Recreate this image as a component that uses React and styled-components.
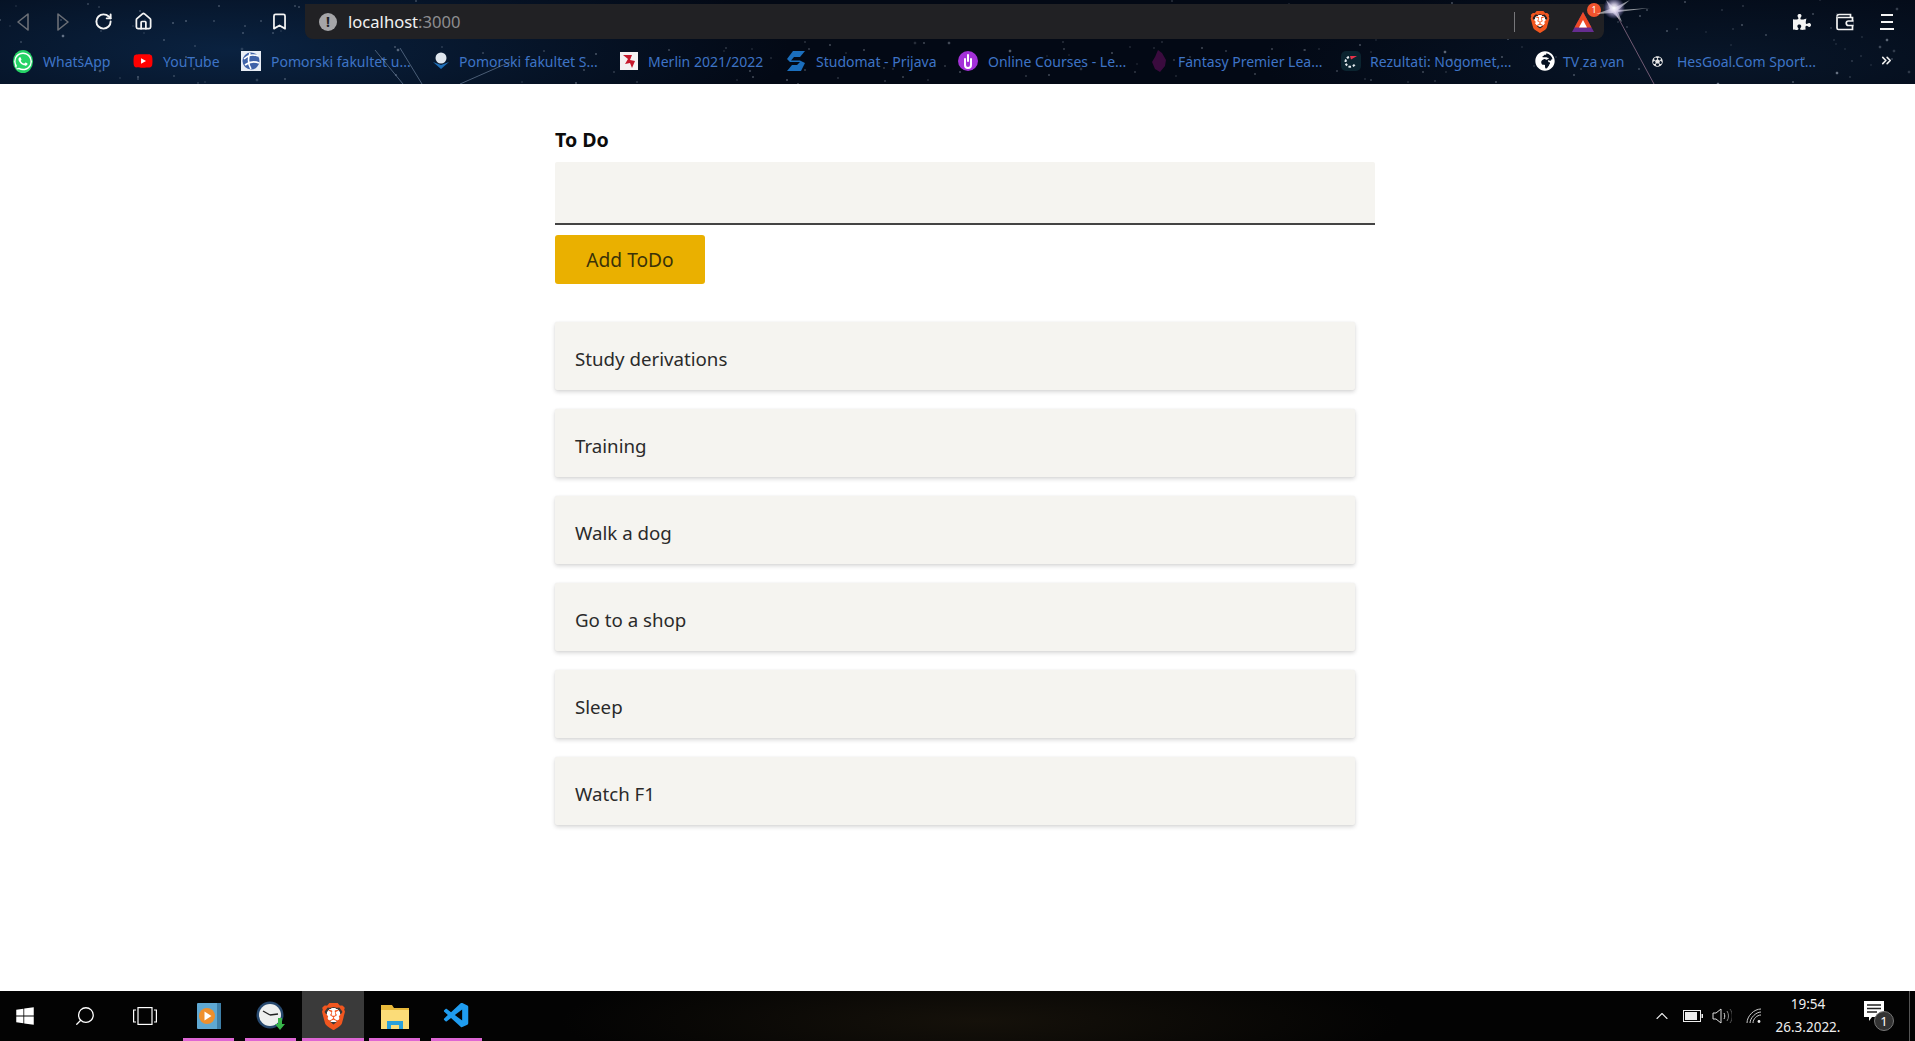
import styled, { createGlobalStyle } from "styled-components";
import { FaWhatsapp, FaPuzzlePiece, FaWindows, FaGlobeAfrica, FaYoutube } from "react-icons/fa";
import { SiBrave } from "react-icons/si";
import { VscVscode } from "react-icons/vsc";
import { IoFootball } from "react-icons/io5";
import { RotateCw, House, Bookmark, Search, ChevronUp, ChevronsRight } from "lucide-react";

const GlobalStyle = createGlobalStyle`
  html, body {
    margin: 0;
    height: 100%;
    overflow: hidden;
    background: #fff;
    font-family: "Noto Sans", "Open Sans", sans-serif;
  }
`;

// little seeded generator so the star field stays the same on every load
function makeStars(count, width, height) {
  let seed = 17;
  const next = () => {
    seed = (seed * 16807) % 2147483647;
    return seed / 2147483647;
  };
  const dots = [];
  for (let i = 0; i < count; i++) {
    const x = Math.round(next() * width);
    const y = Math.round(next() * height);
    const r = next() > 0.88 ? 1.8 : 1;
    const a = (0.25 + next() * 0.55).toFixed(2);
    dots.push(`radial-gradient(circle ${r}px at ${x}px ${y}px, rgba(225,235,250,${a}), transparent)`);
  }
  return dots.join(",");
}

const stars = makeStars(240, 1915, 84);

const Page = styled.div`
  height: 100vh;
  display: flex;
  flex-direction: column;
`;

const Chrome = styled.header`
  position: relative;
  height: 84px;
  flex: none;
  background: ${stars},
    radial-gradient(ellipse 560px 110px at 230px 50px, #0a2240, transparent),
    radial-gradient(ellipse 460px 90px at 1720px 60px, #081629, transparent),
    #030915;
`;

const Sky = styled.svg`
  position: absolute;
  inset: 0;
  z-index: 2;
  pointer-events: none;
`;

const Toolbar = styled.div`
  height: 41px;
  padding: 4px 8px 2px 3px;
  box-sizing: border-box;
  display: flex;
  align-items: stretch;
`;

const ToolGroup = styled.div`
  display: flex;
  align-items: center;
  margin-left: ${(p) => p.$offset || 0}px;
`;

const ToolButton = styled.div`
  width: ${(p) => p.$size || 40}px;
  height: 35px;
  display: flex;
  align-items: center;
  justify-content: center;
  color: ${(p) => (p.$dim ? "#6b6f76" : "#f4f4f4")};
`;

const UrlBar = styled.div`
  flex: 1;
  margin-left: 6px;
  height: 35px;
  background: #212124;
  border-radius: 0 0 8px 8px;
  display: flex;
  align-items: center;
  padding: 0 10px 0 14px;
  font-size: 16.6px;
`;

const InfoDot = styled.span`
  width: 18px;
  height: 18px;
  border-radius: 50%;
  background: #a5a5a8;
  color: #212124;
  font-size: 14px;
  font-weight: 700;
  line-height: 18px;
  text-align: center;
  margin-right: 11px;
`;

const Host = styled.span`
  color: #f2f2f2;
`;

const Port = styled.span`
  color: #8d8d90;
  flex: 1;
`;

const Divider = styled.span`
  width: 1px;
  height: 20px;
  background: #77777a;
  margin-right: 14px;
`;

const BraveIcon = styled(SiBrave)`
  color: #f1561f;
  background: radial-gradient(circle at 50% 45%, #fff 0 34%, transparent 36%);
`;

const RewardsIcon = styled.span`
  position: relative;
  width: 22px;
  height: 20px;
  margin-left: 21px;
  display: flex;
`;

const Badge = styled.span`
  position: absolute;
  top: -9px;
  right: -7px;
  width: 14px;
  height: 14px;
  border-radius: 50%;
  background: #f0532d;
  color: #fff;
  font-size: 9px;
  line-height: 14px;
  text-align: center;
`;

const BookmarkBar = styled.nav`
  height: 40px;
  padding-left: 13px;
  display: flex;
  align-items: center;
`;

const Mark = styled.a`
  display: flex;
  align-items: center;
  margin-right: ${(p) => p.$space}px;
`;

const MarkIcon = styled.span`
  width: 20px;
  height: 20px;
  flex: none;
  display: flex;
  align-items: center;
  justify-content: center;
  margin-right: ${(p) => p.$space || 10}px;
`;

const MarkLabel = styled.span`
  width: ${(p) => p.$width}px;
  color: #3e74c6;
  font-size: 14px;
  white-space: nowrap;
  overflow: visible;
`;

const WhatsAppIcon = styled(FaWhatsapp)`
  color: #fff;
  background: #25d366;
  border-radius: 50%;
  padding: 1px;
`;

const YouTubeIcon = styled(FaYoutube)`
  color: #f00;
  background: linear-gradient(#fff, #fff) center / 8px 8px no-repeat;
`;

const More = styled.span`
  position: absolute;
  right: 21px;
  top: 53px;
  color: #eee;
  display: flex;
`;

const Main = styled.main`
  flex: 1;
  padding: 46px 0 0 555px;
`;

const Column = styled.div`
  width: 820px;
`;

const FieldLabel = styled.label`
  display: block;
  font-size: 19.6px;
  line-height: 20px;
  font-weight: 700;
  color: #0c0c0c;
  margin-bottom: 12px;
`;

const TodoInput = styled.input`
  display: block;
  width: 100%;
  height: 63px;
  box-sizing: border-box;
  border: none;
  border-bottom: 2px solid #444;
  border-radius: 2px 2px 0 0;
  background: #f5f4f0;
  outline: none;
`;

const AddButton = styled.button`
  display: block;
  margin-top: 10px;
  width: 150px;
  height: 49px;
  border: none;
  border-radius: 3px;
  background: #eab000;
  color: #3a3208;
  font-family: inherit;
  font-size: 19.2px;
`;

const List = styled.ul`
  list-style: none;
  margin: 38px 0 0;
  padding: 0;
  width: 800px;
  display: flex;
  flex-direction: column;
  gap: 19px;
`;

const Item = styled.li`
  height: 68px;
  box-sizing: border-box;
  padding: 4px 20px 0;
  display: flex;
  align-items: center;
  background: #f5f4f0;
  border-radius: 2px;
  box-shadow: 0 2px 4px rgba(0, 0, 0, 0.16), 0 0 2px rgba(0, 0, 0, 0.06);
  color: #2a2a2a;
  font-size: 18.7px;
`;

const Taskbar = styled.footer`
  position: relative;
  height: 50px;
  flex: none;
  display: flex;
  align-items: stretch;
  background: radial-gradient(ellipse 420px 60px at 980px 30px, #15110a, transparent), #030303;
`;

const SystemGroup = styled.div`
  display: flex;
  margin-left: -5px;
`;

const SystemButton = styled.div`
  width: 60px;
  display: flex;
  align-items: center;
  justify-content: center;
  color: #fff;
`;

const SearchIcon = styled(Search)`
  transform: scaleX(-1);
`;

const Apps = styled.div`
  display: flex;
  margin-left: 3px;
`;

const AppButton = styled.div`
  width: 62px;
  display: flex;
  align-items: center;
  justify-content: center;
  position: relative;
  background: ${(p) => (p.$active ? "#3a3a3a" : "transparent")};
  &::after {
    content: "";
    position: absolute;
    bottom: 0;
    height: 3px;
    left: ${(p) => (p.$active ? 0 : 5)}px;
    right: ${(p) => (p.$active ? 0 : 6)}px;
    background: #de66d4;
  }
`;

const Tray = styled.div`
  margin-left: auto;
  display: flex;
  align-items: center;
  color: #eee;
  padding-right: 6px;
`;

const TrayIcon = styled.span`
  display: flex;
  margin-right: ${(p) => p.$space}px;
`;

const Clock = styled.div`
  width: 76px;
  margin-right: 18px;
  text-align: center;
  color: #eee;
  font-size: 13.5px;
  line-height: 23px;
`;

const Notes = styled.span`
  position: relative;
  width: 30px;
  height: 30px;
  margin-right: 15px;
  display: flex;
`;

const NoteCount = styled.span`
  position: absolute;
  right: 0;
  bottom: 0;
  width: 20px;
  height: 20px;
  box-sizing: border-box;
  border-radius: 50%;
  background: #333;
  border: 1px solid #777;
  color: #fff;
  font-size: 13px;
  line-height: 18px;
  text-align: center;
`;

const EdgeLine = styled.span`
  position: absolute;
  right: 5px;
  top: 0;
  bottom: 0;
  width: 1px;
  background: #555;
`;

const Triangle = ({ flip }) => (
  <svg width="14" height="20" viewBox="0 0 14 20" fill="none" stroke="currentColor" strokeWidth="1.6">
    <path d={flip ? "M2 2l10 8-10 8z" : "M12 2L2 10l10 8z"} strokeLinejoin="round" />
  </svg>
);

const Wallet = () => (
  <svg width="20" height="20" viewBox="0 0 20 20" fill="none" stroke="currentColor" strokeWidth="1.7">
    <path d="M2 4.5V16a1.5 1.5 0 0 0 1.5 1.5h14V5.5H3" />
    <path d="M2 4.5A2 2 0 0 1 4 2.5h11.5v3" />
    <path d="M18.5 9h-5a2 2 0 0 0 0 4.5h5" fill="#071326" />
  </svg>
);

const Burger = () => (
  <svg width="16" height="18" viewBox="0 0 16 18" stroke="currentColor" strokeWidth="2">
    <path d="M2 2h12M2 9h12M1 16h14" />
  </svg>
);

const Rewards = () => (
  <svg width="22" height="20" viewBox="0 0 22 20">
    <path d="M11 0l11 20H0z" fill="#662d91" />
    <path d="M11 0l8.5 15.5h-17z" fill="#ef4a25" />
    <path d="M11 8l4 7.5H7z" fill="#fff" />
  </svg>
);

const Pomorski = () => (
  <svg width="20" height="20" viewBox="0 0 20 20">
    <rect width="20" height="20" fill="#e8edf5" />
    <circle cx="10" cy="10" r="8.5" fill="#3f62a8" />
    <path d="M3 8c4-4 9-5 14-3M4 14c4-3 9-4 14-2M9 2c-2 5-2 11 1 16" stroke="#fff" strokeWidth="1.6" fill="none" />
  </svg>
);

const Droplet = () => (
  <svg width="20" height="20" viewBox="0 0 20 20">
    <circle cx="10" cy="7" r="5.5" fill="#dfe6ee" />
    <path d="M2 11l8 7 8-7-8 3z" fill="#1f6fb8" />
  </svg>
);

const Merlin = () => (
  <svg width="18" height="18" viewBox="0 0 18 18">
    <rect width="18" height="18" fill="#f4f1f1" />
    <path d="M3 3h9l-2 5 5 1-3 7-2-5-5 1 3-5z" fill="#c5182b" />
  </svg>
);

const Studomat = () => (
  <svg width="18" height="20" viewBox="0 0 18 20" fill="#1b6fbe">
    <path d="M6 0h12l-5 6H7L4 9.5h9L18 12l-4 8H0l5-6h5l3-3H3L0 8z" />
  </svg>
);

const OnlineCourses = () => (
  <svg width="20" height="20" viewBox="0 0 20 20">
    <circle cx="10" cy="10" r="10" fill="#a431d8" />
    <path d="M7 8v6a3 3 0 0 0 6 0V8M10 4v6" stroke="#fff" strokeWidth="2" fill="none" strokeLinecap="round" />
  </svg>
);

const Fantasy = () => (
  <svg width="16" height="22" viewBox="0 0 16 22" fill="#3a0b3e">
    <path d="M6 0l4 3 4 7-1 6-5 6-5-3-3-7 3-5z" />
  </svg>
);

const Rezultati = () => (
  <svg width="20" height="20" viewBox="0 0 20 20">
    <rect width="20" height="20" rx="5" fill="#0b2430" />
    <path d="M9 5h7l-6 3.5z" fill="#e8324a" />
    <path d="M8 6a5 5 0 1 0 6 7" stroke="#e4eaee" strokeWidth="2" strokeDasharray="2.4 1.6" fill="none" />
  </svg>
);

const Player = () => (
  <svg width="26" height="28" viewBox="0 0 26 28">
    <rect x="1" y="1" width="24" height="26" rx="1" fill="#5fa8d2" />
    <rect x="21" y="1" width="4" height="26" fill="#3e7fa8" />
    <circle cx="11" cy="14" r="8" fill="#ef8f2c" />
    <path d="M8.5 9.5l7 4.5-7 4.5z" fill="#fff" />
  </svg>
);

const ClockApp = () => (
  <svg width="30" height="30" viewBox="0 0 30 30">
    <circle cx="14" cy="14" r="13.5" fill="#27496f" />
    <circle cx="14" cy="14" r="11" fill="#eef0ef" />
    <path d="M14 14L7 10M14 14l8-1" stroke="#222" strokeWidth="1.4" />
    <path d="M22 17h4v6h3l-5 6-5-6h3z" fill="#38b54a" />
  </svg>
);

const Explorer = () => (
  <svg width="28" height="26" viewBox="0 0 28 26">
    <path d="M0 2h11l2 3h15v3H0z" fill="#e8b93a" />
    <rect y="7" width="28" height="19" fill="#fbdc78" />
    <path d="M6 26v-8h16v8h-4v-4H10v4z" fill="#2aa0dc" />
  </svg>
);

const BatteryIcon = () => (
  <svg width="20" height="12" viewBox="0 0 20 12">
    <rect x="0.5" y="0.5" width="17" height="11" fill="none" stroke="#eee" />
    <rect x="2" y="2" width="12" height="8" fill="#eee" />
    <rect x="18.5" y="4" width="1.5" height="4" fill="#eee" />
  </svg>
);

const Speaker = () => (
  <svg width="20" height="18" viewBox="0 0 20 18" fill="none" stroke="#ddd">
    <path d="M1 6h3l5-4v14l-5-4H1z" />
    <path d="M12 6c1 2 1 4 0 6" />
    <path d="M15 4c2 3 2 7 0 10" stroke="#888" />
    <path d="M18 2c3 4 3 10 0 14" stroke="#555" />
  </svg>
);

const Wifi = () => (
  <svg width="16" height="16" viewBox="0 0 16 16" fill="none" stroke="#ccc">
    <path d="M1 15C1 8 8 1 15 1M4 15c0-5 6-11 11-11M7 15c0-4 4-8 8-8" />
    <circle cx="13" cy="13.5" r="1.4" fill="#eee" stroke="none" />
  </svg>
);

const Comment = () => (
  <svg width="20" height="22" viewBox="0 0 20 22">
    <path d="M0 0h20v16H8l-3 4v-4H0z" fill="#fff" />
    <path d="M3 4h14M3 7.5h14M3 11h10" stroke="#222" strokeWidth="1.3" />
  </svg>
);

const bookmarks = [
  { label: "WhatsApp", width: 68, space: 22, icon: <WhatsAppIcon size={21} /> },
  { label: "YouTube", width: 58, space: 20, icon: <YouTubeIcon size={22} /> },
  { label: "Pomorski fakultet u...", width: 140, space: 20, icon: <Pomorski /> },
  { label: "Pomorski fakultet S...", width: 139, space: 21, icon: <Droplet />, gap: 8 },
  { label: "Merlin 2021/2022", width: 118, space: 20, icon: <Merlin />, gap: 9 },
  { label: "Studomat - Prijava", width: 122, space: 20, icon: <Studomat />, gap: 10 },
  { label: "Online Courses - Le...", width: 140, space: 22, icon: <OnlineCourses />, gap: 10 },
  { label: "Fantasy Premier Lea...", width: 143, space: 20, icon: <Fantasy />, gap: 8 },
  { label: "Rezultati: Nogomet,...", width: 143, space: 22, icon: <Rezultati />, gap: 9 },
  { label: "TV za van", width: 64, space: 20, icon: <FaGlobeAfrica size={20} color="#fff" />, gap: 8 },
  { label: "HesGoal.Com Sport...", width: 141, space: 0, icon: <IoFootball size={13} color="#e8e8e8" />, gap: 10 },
];

const todos = ["Study derivations", "Training", "Walk a dog", "Go to a shop", "Sleep", "Watch F1"];

export default function App() {
  return (
    <Page>
      <GlobalStyle />
      <Chrome>
        <Sky width="1915" height="84">
          <defs>
            <radialGradient id="glow">
              <stop offset="0" stopColor="#fff" />
              <stop offset="0.35" stopColor="#efe6ff" stopOpacity=".8" />
              <stop offset="1" stopColor="#b9a6ff" stopOpacity="0" />
            </radialGradient>
          </defs>
          <path d="M375 50l28 34M400 48l22 36M510 62l-50 22" stroke="#8ea4c0" strokeOpacity=".5" fill="none" />
          <path d="M1614 10l40 74" stroke="#b98aa8" strokeOpacity=".6" />
          <path d="M1614 8L1630 0L1618 10L1650 8L1618 12L1622 22L1613 13L1596 14L1610 9L1606 0z" fill="#fff" fillOpacity=".55" />
          <circle cx="1614" cy="8" r="11" fill="url(#glow)" />
        </Sky>
        <Toolbar>
          <ToolGroup>
            <ToolButton $dim><Triangle /></ToolButton>
            <ToolButton $dim><Triangle flip /></ToolButton>
            <ToolButton><RotateCw size={19} strokeWidth={2.4} /></ToolButton>
            <ToolButton><House size={19} strokeWidth={2.2} /></ToolButton>
          </ToolGroup>
          <ToolGroup $offset={96}>
            <ToolButton><Bookmark size={19} strokeWidth={2.2} /></ToolButton>
          </ToolGroup>
          <UrlBar>
            <InfoDot>!</InfoDot>
            <Host>localhost</Host>
            <Port>:3000</Port>
            <Divider />
            <BraveIcon size={22} />
            <RewardsIcon>
              <Rewards />
              <Badge>1</Badge>
            </RewardsIcon>
          </UrlBar>
          <ToolGroup $offset={176}>
            <ToolButton $size={43}><FaPuzzlePiece size={18} /></ToolButton>
            <ToolButton $size={43}><Wallet /></ToolButton>
            <ToolButton $size={41}><Burger /></ToolButton>
          </ToolGroup>
        </Toolbar>
        <BookmarkBar>
          {bookmarks.map((b) => (
            <Mark key={b.label} $space={b.space}>
              <MarkIcon $space={b.gap}>{b.icon}</MarkIcon>
              <MarkLabel $width={b.width}>{b.label}</MarkLabel>
            </Mark>
          ))}
          <More><ChevronsRight size={15} strokeWidth={2.6} /></More>
        </BookmarkBar>
      </Chrome>

      <Main>
        <Column>
          <FieldLabel>To Do</FieldLabel>
          <TodoInput />
          <AddButton>Add ToDo</AddButton>
          <List>
            {todos.map((todo) => (
              <Item key={todo}>{todo}</Item>
            ))}
          </List>
        </Column>
      </Main>

      <Taskbar>
        <SystemGroup>
          <SystemButton><FaWindows size={20} /></SystemButton>
          <SystemButton><SearchIcon size={22} strokeWidth={1.4} /></SystemButton>
          <SystemButton>
            <svg width="24" height="18" viewBox="0 0 24 18" fill="none" stroke="#fff" strokeWidth="1.2">
              <rect x="5" y="0.6" width="14" height="16.8" />
              <path d="M3 3H.6v12H3M21 3h2.4v12H21" />
            </svg>
          </SystemButton>
        </SystemGroup>
        <Apps>
          <AppButton><Player /></AppButton>
          <AppButton><ClockApp /></AppButton>
          <AppButton $active><BraveIcon size={27} /></AppButton>
          <AppButton><Explorer /></AppButton>
          <AppButton><VscVscode size={30} color="#1f9cf0" /></AppButton>
        </Apps>
        <Tray>
          <TrayIcon $space={11}><ChevronUp size={20} strokeWidth={1.3} /></TrayIcon>
          <TrayIcon $space={9}><BatteryIcon /></TrayIcon>
          <TrayIcon $space={14}><Speaker /></TrayIcon>
          <TrayIcon $space={8}><Wifi /></TrayIcon>
          <Clock>
            <div>19:54</div>
            <div>26.3.2022.</div>
          </Clock>
          <Notes>
            <Comment />
            <NoteCount>1</NoteCount>
          </Notes>
        </Tray>
        <EdgeLine />
      </Taskbar>
    </Page>
  );
}
